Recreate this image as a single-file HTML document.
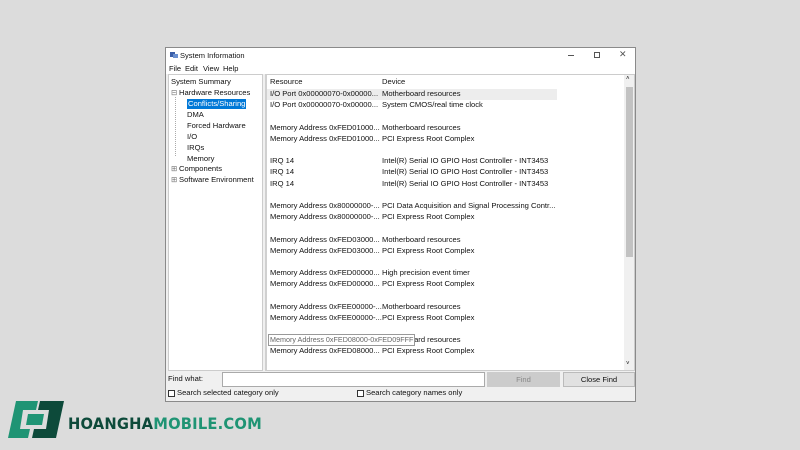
<!DOCTYPE html>
<html><head><meta charset="utf-8">
<style>
*{margin:0;padding:0;box-sizing:border-box}
body{width:800px;height:450px;background:#dcdcdc;position:relative;overflow:hidden;font-family:"Segoe UI","Liberation Sans",sans-serif;font-size:8px;color:#111}
.win{position:absolute;left:165px;top:47px;width:471px;height:355px;background:#f0f0f0;border:1px solid #8a8a8a}
.title{position:absolute;left:0;top:0;width:100%;height:15px;background:#fff}
.title span{position:absolute;left:14px;top:3px;font-size:7.5px}
.menu{position:absolute;left:0;top:15px;width:100%;height:11px;background:#fff;font-size:7.5px}
.menu span{position:absolute;top:1px}
.left{position:absolute;left:2px;top:26px;width:95px;height:297px;background:#fff;border:1px solid #ccc}
.right{position:absolute;left:99px;top:26px;width:370px;height:297px;background:#fff;border:1px solid #ccc;border-left:2px solid #d0d0d0}
.t{position:absolute;white-space:nowrap;font-size:7.6px;line-height:10px}
.sb{position:absolute;right:0;top:0;width:10px;height:100%;background:#f0f0f0}
.thumb{position:absolute;left:2px;top:12px;width:7px;height:170px;background:#c2c2c2}
.find{position:absolute;top:323px;left:0;width:100%;height:31px}
</style></head><body>
<div class="win">
 <div class="title">
  <svg style="position:absolute;left:4px;top:3px" width="8" height="8"><rect x="0" y="1" width="5" height="5" fill="#3b5fa8"/><rect x="3" y="3" width="5" height="4" fill="#6a8fcf"/></svg>
  <span>System Information</span>
  <div style="position:absolute;left:402px;top:7px;width:6px;height:1px;background:#555"></div>
  <div style="position:absolute;left:428px;top:4px;width:6px;height:6px;border:1px solid #555"></div>
  <span style="left:453px;top:1px;font-size:9px;color:#555">✕</span>
 </div>
 <div class="menu"><span style="left:3px">File</span><span style="left:19px">Edit</span><span style="left:37px">View</span><span style="left:57px">Help</span></div>
 <div class="left">
  <div class="t" style="left:2px;top:2px">System Summary</div>
  <div class="t" style="left:2px;top:13px;color:#777">⊟</div><div class="t" style="left:10px;top:13px">Hardware Resources</div>
  <div style="position:absolute;left:6px;top:22px;width:0;height:59px;border-left:1px dotted #aaa"></div>
  <div class="t" style="left:18px;top:24px;background:#0078d7;color:#fff;padding:0 1px">Conflicts/Sharing</div>
  <div class="t" style="left:18px;top:35px">DMA</div>
  <div class="t" style="left:18px;top:46px">Forced Hardware</div>
  <div class="t" style="left:18px;top:57px">I/O</div>
  <div class="t" style="left:18px;top:68px">IRQs</div>
  <div class="t" style="left:18px;top:79px">Memory</div>
  <div class="t" style="left:2px;top:89px;color:#777">⊞</div><div class="t" style="left:10px;top:89px">Components</div>
  <div class="t" style="left:2px;top:100px;color:#777">⊞</div><div class="t" style="left:10px;top:100px">Software Environment</div>
 </div>
 <div class="right">
  <div style="position:absolute;left:0;top:14px;width:290px;height:11px;background:#ededed"></div>
  <div class="t" style="left:3px;top:2px">Resource</div><div class="t" style="left:115px;top:2px">Device</div>
  <div class="t" style="left:3px;top:14px">I/O Port 0x00000070-0x00000...</div><div class="t" style="left:115px;top:14px">Motherboard resources</div>
  <div class="t" style="left:3px;top:25px">I/O Port 0x00000070-0x00000...</div><div class="t" style="left:115px;top:25px">System CMOS/real time clock</div>
  <div class="t" style="left:3px;top:48px">Memory Address 0xFED01000...</div><div class="t" style="left:115px;top:48px">Motherboard resources</div>
  <div class="t" style="left:3px;top:59px">Memory Address 0xFED01000...</div><div class="t" style="left:115px;top:59px">PCI Express Root Complex</div>
  <div class="t" style="left:3px;top:81px">IRQ 14</div><div class="t" style="left:115px;top:81px">Intel(R) Serial IO GPIO Host Controller - INT3453</div>
  <div class="t" style="left:3px;top:92px">IRQ 14</div><div class="t" style="left:115px;top:92px">Intel(R) Serial IO GPIO Host Controller - INT3453</div>
  <div class="t" style="left:3px;top:104px">IRQ 14</div><div class="t" style="left:115px;top:104px">Intel(R) Serial IO GPIO Host Controller - INT3453</div>
  <div class="t" style="left:3px;top:126px">Memory Address 0x80000000-...</div><div class="t" style="left:115px;top:126px">PCI Data Acquisition and Signal Processing Contr...</div>
  <div class="t" style="left:3px;top:137px">Memory Address 0x80000000-...</div><div class="t" style="left:115px;top:137px">PCI Express Root Complex</div>
  <div class="t" style="left:3px;top:160px">Memory Address 0xFED03000...</div><div class="t" style="left:115px;top:160px">Motherboard resources</div>
  <div class="t" style="left:3px;top:171px">Memory Address 0xFED03000...</div><div class="t" style="left:115px;top:171px">PCI Express Root Complex</div>
  <div class="t" style="left:3px;top:193px">Memory Address 0xFED00000...</div><div class="t" style="left:115px;top:193px">High precision event timer</div>
  <div class="t" style="left:3px;top:204px">Memory Address 0xFED00000...</div><div class="t" style="left:115px;top:204px">PCI Express Root Complex</div>
  <div class="t" style="left:3px;top:227px">Memory Address 0xFEE00000-...</div><div class="t" style="left:115px;top:227px">Motherboard resources</div>
  <div class="t" style="left:3px;top:238px">Memory Address 0xFEE00000-...</div><div class="t" style="left:115px;top:238px">PCI Express Root Complex</div>
  <div class="t" style="left:115px;top:260px">Motherboard resources</div>
  <div class="t" style="left:1px;top:259px;background:#fff;border:1px solid #999;color:#666;padding:0 1px;font-size:7.2px">Memory Address 0xFED08000-0xFED09FFF</div>
  <div class="t" style="left:3px;top:271px">Memory Address 0xFED08000...</div><div class="t" style="left:115px;top:271px">PCI Express Root Complex</div>
  <div class="sb"><div class="thumb"></div><div class="t" style="left:2px;top:-1px;font-size:6px">˄</div><div class="t" style="left:2px;top:284px;font-size:6px">˅</div></div>
 </div>
 <div class="find">
  <div class="t" style="left:2px;top:3px">Find what:</div>
  <div style="position:absolute;left:56px;top:1px;width:263px;height:15px;background:#fff;border:1px solid #aaa"></div>
  <div style="position:absolute;left:321px;top:1px;width:73px;height:15px;background:#ccc;color:#888;text-align:center;line-height:15px;font-size:7.6px">Find</div>
  <div style="position:absolute;left:397px;top:1px;width:72px;height:15px;background:#e1e1e1;border:1px solid #bbb;text-align:center;line-height:13px;font-size:7.6px">Close Find</div>
  <div style="position:absolute;left:2px;top:19px;width:7px;height:7px;border:1px solid #333;background:#fff"></div><div class="t" style="left:11px;top:17px">Search selected category only</div>
  <div style="position:absolute;left:191px;top:19px;width:7px;height:7px;border:1px solid #333;background:#fff"></div><div class="t" style="left:200px;top:17px">Search category names only</div>
 </div>
</div>
<svg style="position:absolute;left:8px;top:401px" width="56" height="38" viewBox="0 0 56 38">
 <polygon points="8,0 30,0 28,9 15,9 12,28 22,28 20,37 0,37" fill="#1f9474"/>
 <polygon points="32,0 56,0 48,37 24,37 26,28 38,28 41,9 30,9" fill="#0d4a3a"/>
 <polygon points="20,13 36,13 34,24 18,24" fill="#1f9474"/>
</svg>
<div style="position:absolute;left:68px;top:414px;font-family:'DejaVu Sans','Liberation Sans',sans-serif;font-weight:bold;font-size:16px;letter-spacing:0.2px;color:#0d4a3a;white-space:nowrap;transform:scaleX(0.92);transform-origin:left">HOANGHA<span style="color:#1f9474">MOBILE.COM</span></div>
</body></html>
